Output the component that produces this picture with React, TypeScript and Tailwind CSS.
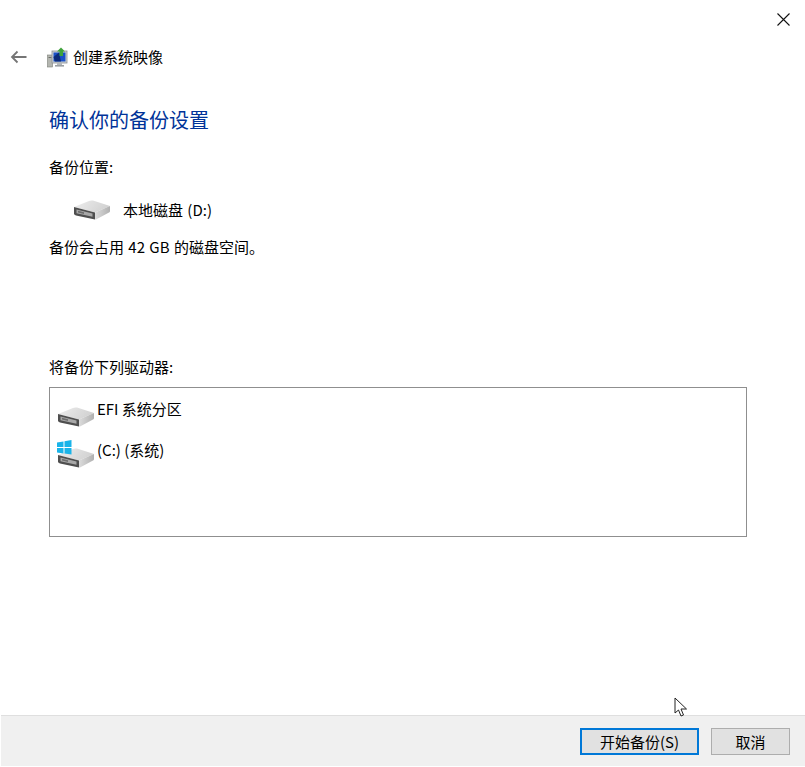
function Drive({ win }: { win?: boolean }) {
  const id = win ? "w" : "p";
  return (
    <svg className="shrink-0" width="38" height={win ? 28 : 20} viewBox={win ? "0 -8 38 28" : "0 0 38 20"}>
      <defs>
        <linearGradient id={`top-${id}`} x1="0" y1="0" x2="1" y2="0.3">
          <stop offset="0" stopColor="#eeeeee" />
          <stop offset="1" stopColor="#d2d2d2" />
        </linearGradient>
        <linearGradient id={`side-${id}`} x1="0" y1="0" x2="1" y2="0">
          <stop offset="0" stopColor="#dcdcdc" />
          <stop offset="1" stopColor="#b0b0b0" />
        </linearGradient>
      </defs>
      <path d="M1 7 L16 1 Q18 0 20 0.6 L37 6 L22 12.5 Z" fill={`url(#top-${id})`} />
      <path d="M22 12.5 L37 6 L37 11 Q37 12 36 12.5 L23 19.5 L22 19.5 Z" fill={`url(#side-${id})`} />
      <path d="M1 7 L22 12.5 L22 19.5 L3 15.5 Q1 15 1 13.5 Z" fill="#4f4f4f" />
      <path d="M3.5 9.5 L19.5 13.6 L19.5 16.8 L3.5 13.2 Z" fill="#a8a8a8" />
      <path d="M5 10.8 L11 12.3 L11 14 L5 12.6 Z" fill="#6e6e6e" />
      {win && (
        <g fill="#1ab4e9">
          <path d="M0 -5.5 L6.5 -6.5 L6.5 -1 L0 -1 Z" />
          <path d="M7.5 -6.7 L14.5 -8 L14.5 -1 L7.5 -1 Z" />
          <path d="M0 0 L6.5 0 L6.5 5.5 L0 4.5 Z" />
          <path d="M7.5 0 L14.5 0 L14.5 6.5 L7.5 5.6 Z" />
        </g>
      )}
    </svg>
  );
}

function BackupIcon() {
  return (
    <svg width="21" height="21" viewBox="0 0 21 21">
      <rect x="0.5" y="8" width="5" height="12" fill="#b4b6b0" stroke="#7c7f79" strokeWidth="0.6" />
      <rect x="1.5" y="10" width="3" height="1" fill="#6c6f69" />
      <rect x="5" y="4" width="15" height="12" fill="#cdd2d6" stroke="#8a8f94" strokeWidth="0.8" />
      <rect x="6.5" y="5.5" width="12" height="9" fill="#1a50c8" />
      <path d="M6.5 10 L12 5.5 L14 14.5 L8 14.5 Z" fill="#0b2a7a" />
      <rect x="10" y="16" width="5" height="2" fill="#b4b8bb" />
      <rect x="8" y="18" width="9" height="1.6" fill="#9b9fa2" />
      <path d="M14 0.5 L18 4.5 L16 4.5 L16 9 L12.5 9 L12.5 4.5 L10 4.5 Z" fill="#3fa33b" />
    </svg>
  );
}

export default function App() {
  return (
    <div className="w-[805px] h-[767px] flex flex-col bg-white text-black text-[15px] leading-[20px] font-['Noto_Sans_CJK_SC','Noto_Sans',sans-serif] overflow-hidden relative">
      <div className="h-[37px] flex justify-end items-start pt-[13px] pr-[15px]">
        <svg width="13" height="13" viewBox="0 0 13 13">
          <path d="M0.5 0.5 L12.5 12.5 M12.5 0.5 L0.5 12.5" stroke="#111" strokeWidth="1.1" fill="none" />
        </svg>
      </div>
      <div className="h-[40px] flex items-center pl-[10px]">
        <svg width="17" height="14" viewBox="0 0 17 14" className="mr-[20px]">
          <path d="M16.5 7 H2 M7.5 1.5 L2 7 L7.5 12.5" stroke="#757575" strokeWidth="1.8" fill="none" />
        </svg>
        <BackupIcon />
        <span className="ml-[5px]">创建系统映像</span>
      </div>
      <div className="flex-1 flex flex-col pl-[49px] pr-[58px]">
        <h1 className="mt-[30px] text-[20px] leading-[26px] text-[#003399] font-normal">确认你的备份设置</h1>
        <p className="mt-[24px]">备份位置:</p>
        <div className="mt-[21px] flex items-center pl-[24px] h-[24px]">
          <Drive />
          <span className="ml-[12px] [word-spacing:1px]">本地磁盘 (D:)</span>
        </div>
        <p className="mt-[15px] [word-spacing:1px]">备份会占用 42 GB 的磁盘空间。</p>
        <p className="mt-[100px]">将备份下列驱动器:</p>
        <div className="mt-[10px] h-[150px] border border-[#8f8f8f] pl-[7px] pt-[11px] flex flex-col">
          <div className="h-[41px] flex items-start">
            <div className="mt-[8px]">
              <Drive />
            </div>
            <span className="ml-[2px]">EFI 系统分区</span>
          </div>
          <div className="h-[41px] flex items-start">
            <Drive win />
            <span className="ml-[2px]">(C:) (系统)</span>
          </div>
        </div>
      </div>
      <div className="h-[51px] mb-[1px] bg-[#f0f0f0] border-t border-[#dfdfdf] ml-[1px] flex items-center justify-end pr-[15px] gap-[12px]">
        <button className="w-[119px] h-[27px] bg-[#e1e1e1] border-2 border-[#0078d7] flex items-center justify-center text-[15px] leading-none">
          开始备份(S)
        </button>
        <button className="w-[79px] h-[27px] bg-[#e1e1e1] border border-[#adadad] flex items-center justify-center text-[15px] leading-none">
          取消
        </button>
      </div>
      <svg className="absolute left-[674px] top-[697px]" width="14" height="21" viewBox="0 0 14 21">
        <path d="M1 1 L1 16 L4.5 13 L7 19 L9.5 18 L7 12 L12.5 12 Z" fill="#fff" stroke="#222" strokeWidth="1" />
      </svg>
    </div>
  );
}
